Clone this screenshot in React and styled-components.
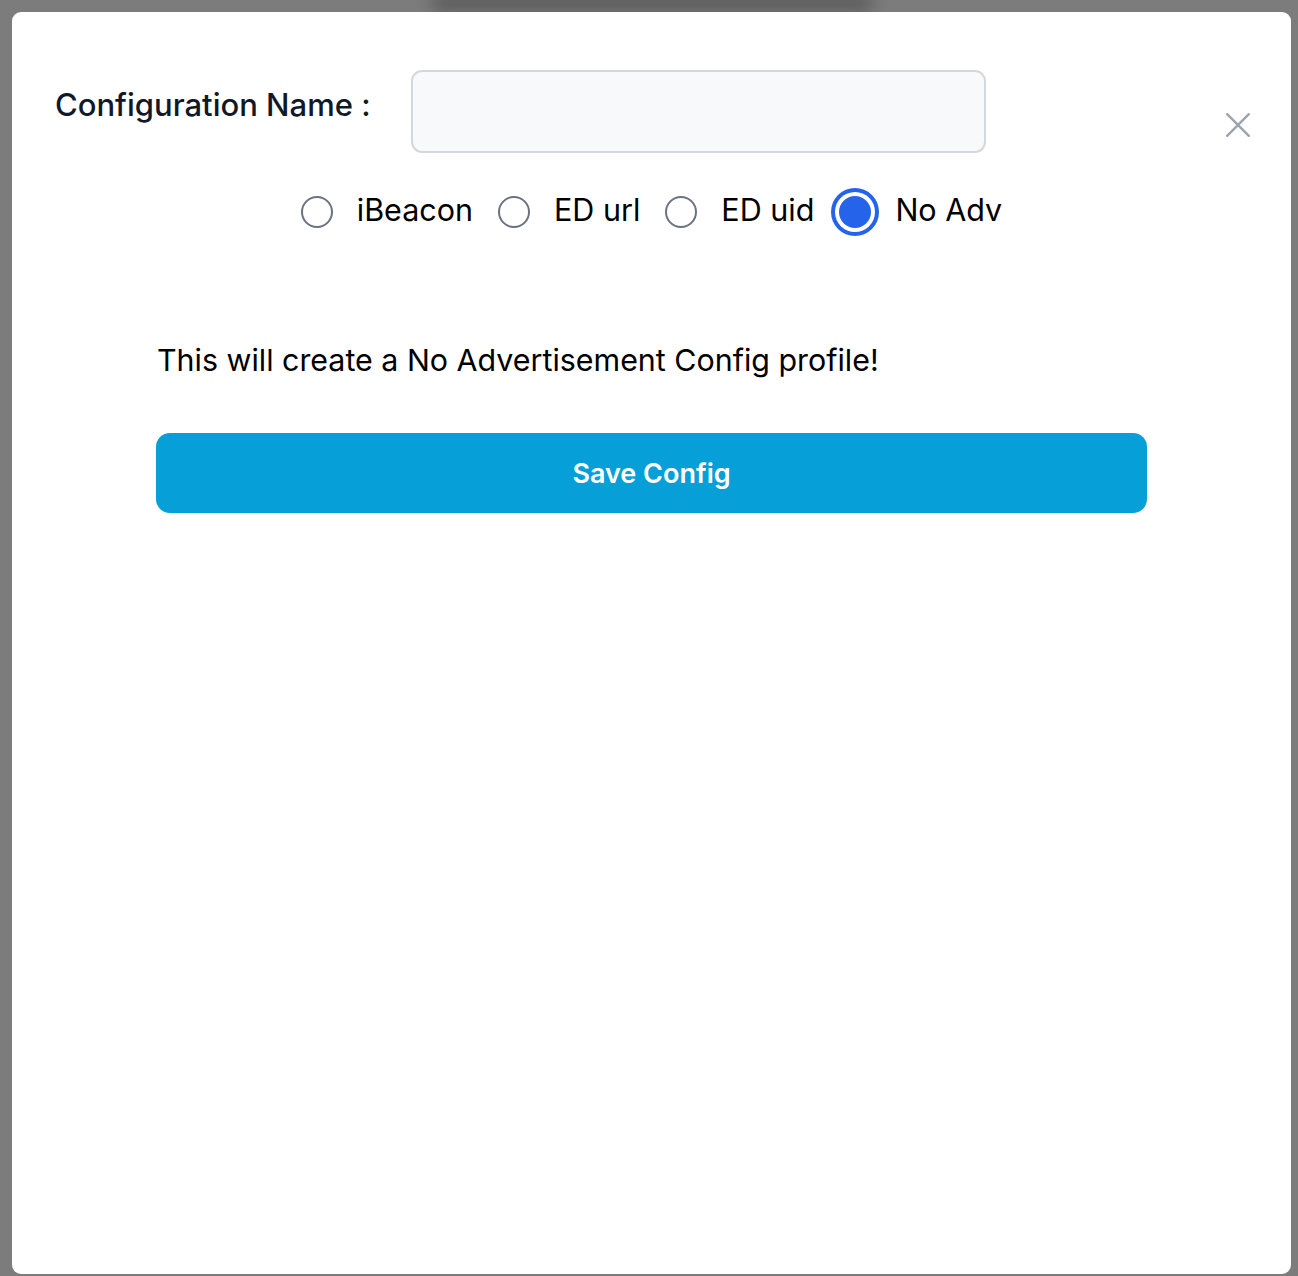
import styled, {createGlobalStyle} from "styled-components"
import {useState} from "react"

const Global = createGlobalStyle`
  body {
    margin: 0;
    background: #7b7c7b;
    font-family: Inter, "Noto Sans", sans-serif;
  }
`

const Overlay = styled.div`
  min-height: 1276px;
  box-sizing: border-box;
  padding: 0 7px 0 12px;
  overflow: hidden;
`

const Glimpse = styled.div`
  height: 12px;
  display: flex;
  justify-content: center;
  & > span {
    width: 440px;
    height: 14px;
    margin-top: -4px;
    background: #555;
    filter: blur(8px);
  }
`

const Modal = styled.div`
  position: relative;
  height: 1262px;
  box-sizing: border-box;
  background: #fff;
  border-radius: 9px;
  padding: 58px 43px 0;
`

const Close = styled.button`
  position: absolute;
  top: 100px;
  right: 40px;
  width: 26px;
  height: 26px;
  padding: 0;
  border: 0;
  background: none;
  color: #9ca3af;
  cursor: pointer;
`

const NameRow = styled.div`
  display: flex;
  align-items: center;
`

const Label = styled.label`
  font-size: 31px;
  font-weight: 500;
  color: #111827;
  margin-top: -14px;
`

const Input = styled.input`
  width: 575px;
  height: 83px;
  box-sizing: border-box;
  margin-left: 40px;
  border: 2px solid #d4d7dc;
  border-radius: 11px;
  background: #f8f9fb;
  outline: none;
  font: inherit;
  font-size: 28px;
  padding: 0 20px;
`

const RadioRow = styled.div`
  display: flex;
  justify-content: center;
  align-items: center;
  height: 48px;
  margin-top: 35px;
`

const Option = styled.label`
  display: flex;
  align-items: center;
  font-size: 30.5px;
  color: #000;
  cursor: pointer;
  margin-right: 25px;
  &:last-child {
    margin-right: 0;
  }
  & > span:last-child {
    padding-bottom: 5px;
  }
`

const Dot = styled.span`
  width: 32px;
  height: 32px;
  box-sizing: border-box;
  border-radius: 50%;
  margin-right: 24px;
  border: ${p => (p.$on ? "none" : "2px solid #6b7280")};
  background: ${p => (p.$on ? "#2563eb" : "#fff")};
  box-shadow: ${p => (p.$on ? "0 0 0 4px #fff, 0 0 0 8px #2563eb" : "none")};
`

const Body = styled.div`
  width: 991px;
  margin: 104px auto 0;
`

const Message = styled.p`
  margin: 0 0 0 1px;
  font-size: 30.4px;
  line-height: 40px;
  color: #000;
`

const Save = styled.button`
  display: block;
  width: 100%;
  height: 80px;
  margin-top: 53px;
  border: 0;
  border-radius: 14px;
  background: #079fd8;
  color: #fff;
  font-family: inherit;
  font-size: 27px;
  font-weight: 600;
  cursor: pointer;
`

const options = ["iBeacon", "ED url", "ED uid", "No Adv"]

export default function App() {
  const [adv, setAdv] = useState("No Adv")
  return (
    <Overlay>
      <Global />
      <Glimpse>
        <span />
      </Glimpse>
      <Modal>
        <Close aria-label="close">
          <svg width="26" height="26" viewBox="0 0 24 24" fill="none" stroke="currentColor" strokeWidth="2.2" strokeLinecap="round">
            <path d="M2 2L22 22M22 2L2 22" />
          </svg>
        </Close>
        <NameRow>
          <Label>Configuration Name :</Label>
          <Input />
        </NameRow>
        <RadioRow>
          {options.map(o => (
            <Option key={o} onClick={() => setAdv(o)}>
              <Dot $on={adv === o} />
              <span>{o}</span>
            </Option>
          ))}
        </RadioRow>
        <Body>
          <Message>This will create a No Advertisement Config profile!</Message>
          <Save>Save Config</Save>
        </Body>
      </Modal>
    </Overlay>
  )
}
